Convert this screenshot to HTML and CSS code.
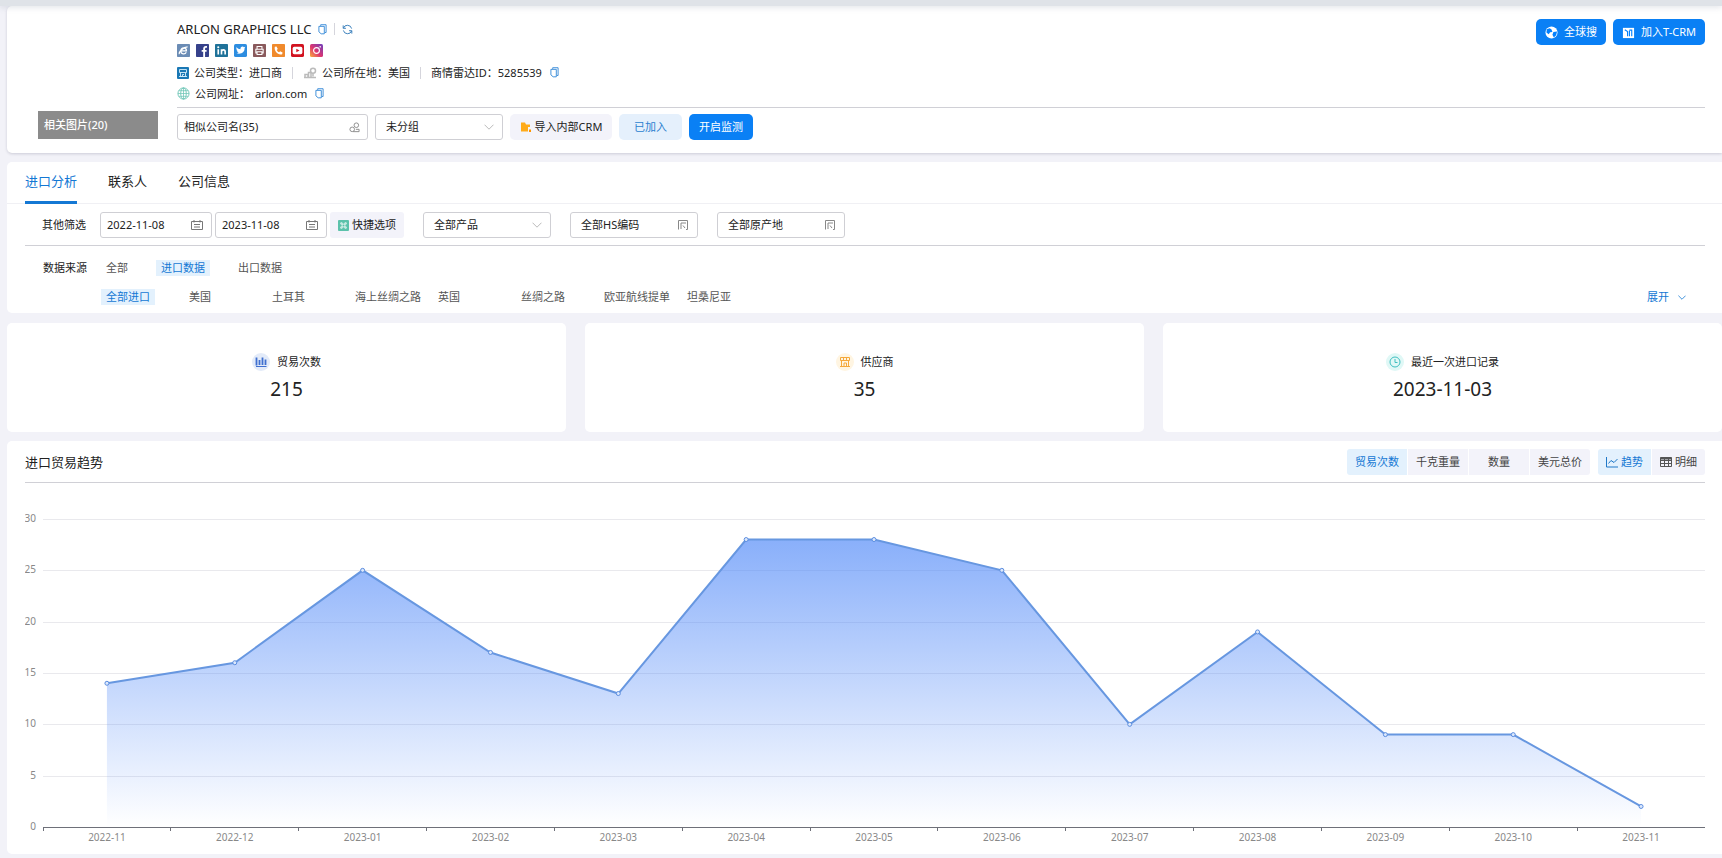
FILE: index.html
```html
<!DOCTYPE html>
<html lang="zh-CN">
<head>
    <meta charset="UTF-8">
    <meta name="viewport" content="width=device-width, initial-scale=1.0">
    <title>ARLON GRAPHICS LLC</title>
    <link rel="stylesheet" href="styles.css">
</head>
<body>
    <!-- shared icons -->
    <svg class="sprite" aria-hidden="true">
        <symbol id="copy" viewBox="0 0 10 12">
            <path d="M3 2V.7h6v8.6H7.6M1 2.5h6v8.3H3.5L1 8.6z" fill="none" stroke="#2f86d6"/>
        </symbol>
        <symbol id="chevron" viewBox="0 0 10 6">
            <path d="M.5.7 5 5.2 9.5.7" fill="none" stroke="currentColor"/>
        </symbol>
        <symbol id="calendar" viewBox="0 0 12 10">
            <path d="M.5 1.5h11v8H.5zM3 0v2.5M9 0v2.5M3 4.5h6M3 7h6" fill="none" stroke="#777"/>
        </symbol>
        <symbol id="popup" viewBox="0 0 10 10">
            <path d="M.5 9.5V.5h9v9H8M3 9V3h5M5 5.5 7 8" fill="none" stroke="#888"/>
        </symbol>
    </svg>

    <div class="topbar"></div>

    <header class="panel company">
        <div class="photo">相关图片(20)</div>
        <div class="company-main">
            <div class="company-top">
                <div class="details">
                    <div class="name-row">
                        <h1>ARLON GRAPHICS LLC</h1>
                        <button class="icon-btn" aria-label="复制名称"><svg class="icon-copy"><use href="#copy"/></svg></button>
                        <span class="sep"></span>
                        <button class="icon-btn" aria-label="刷新">
                            <svg class="icon-refresh" viewBox="0 0 12 12" fill="none" stroke="#2f78b8"><path d="M1.5 4.5A4.700 4.700 0 0 1 10.500 5M1.300 1.500v3.200h3M10.500 7.500A4.700 4.700 0 0 1 1.500 7M10.700 10.500V7.300h-3"/></svg>
                        </button>
                    </div>
                    <div class="social">
                        <a href="#" aria-label="网站"><svg viewBox="0 0 16 16"><rect width="16" height="16" rx="1" fill="#6b8cb5"/><path d="M4.500 8.500h7.200c0-5-6.700-5.200-7 0 0 4.300 5.300 4.600 6.700 1.700M3 12.500C1.500 10 8 3.500 13 3.500" fill="none" stroke="#fff" stroke-width="1.500"/></svg></a>
                        <a href="#" aria-label="Facebook"><svg viewBox="0 0 16 16"><rect width="16" height="16" rx="1" fill="#36418b"/><path d="M13.500 3.500h-1.300c-1.700 0-2.200.8-2.200 2.500v10M7 8.500h6" fill="none" stroke="#fff" stroke-width="2.300"/></svg></a>
                        <a href="#" aria-label="LinkedIn"><svg viewBox="0 0 16 16"><rect width="16" height="16" rx="1" fill="#1f7299"/><path d="M4 6.500V13M8 13V6.500M8 9.500c.2-3 4.500-3 4.500 0V13" fill="none" stroke="#fff" stroke-width="2"/><circle cx="4" cy="4" r="1.300" fill="#fff"/></svg></a>
                        <a href="#" aria-label="Twitter"><svg viewBox="0 0 16 16"><rect width="16" height="16" rx="2" fill="#2d8de0"/><path d="M3 4c1.500 1.700 3 2.300 5 2.400C7.500 3.300 11 2.300 12.300 4l1.700-.5-1 1.700c.2 4.500-3.500 8-10 6.300 1.300 0 2.400-.3 3-1-1.200-.2-2-.8-2.200-1.700h1C3.500 8.300 3 7.500 3 6.500l1 .2C2.800 5.800 2.500 5 3 4z" fill="#fff"/></svg></a>
                        <a href="#" aria-label="传真"><svg viewBox="0 0 16 16"><rect width="16" height="16" rx="1" fill="#8a5a5c"/><path d="M5 6V3h6v3M5 11H3.500V6.500h9V11H11M5 9.500h6V13H5z" fill="none" stroke="#fff" stroke-width="1.300"/></svg></a>
                        <a href="#" aria-label="电话"><svg viewBox="0 0 16 16"><rect width="16" height="16" rx="1" fill="#f08a2c"/><path d="M3.500 3.500 5.500 3l1.600 3-1.300 1.300c.8 1.500 1.600 2.300 3 3L10 9l3 1.500-.5 2C8 14.500 2 8.500 3.500 3.500z" fill="#fff"/></svg></a>
                        <a href="#" aria-label="YouTube"><svg viewBox="0 0 16 16"><rect width="16" height="16" rx="2" fill="#d2121f"/><rect x="2" y="3.500" width="12" height="9" rx="2" fill="#fff"/><path d="m6.500 5.700 4 2.300-4 2.300z" fill="#d2121f"/></svg></a>
                        <a href="#" aria-label="Instagram"><svg viewBox="0 0 16 16"><defs><linearGradient id="insta" x1="0" y1="1" x2="1" y2="0"><stop offset="0" stop-color="#fbb03b"/><stop offset=".45" stop-color="#dd3470"/><stop offset="1" stop-color="#6a3fc0"/></linearGradient></defs><rect width="16" height="16" rx="2" fill="url(#insta)"/><circle cx="8" cy="8" r="3.600" fill="none" stroke="#fff" stroke-width="1.400"/><circle cx="12.500" cy="3.500" r="1" fill="#fff"/></svg></a>
                    </div>
                    <div class="info-row">
                        <svg class="icon-type" viewBox="0 0 12 12"><rect width="12" height="12" rx="1" fill="#1a78b5"/><path d="M2.500 2.500h7v3h-7zM3.500 5.500v4h5v-4M2 9.500h8M5.500 9.500v-2h1.500" fill="none" stroke="#d5ecfa" stroke-width=".9"/></svg>
                        <span>公司类型：进口商</span>
                        <span class="sep"></span>
                        <svg class="icon-place" viewBox="0 0 14 12" fill="none" stroke="#bbb"><path d="M1 10.500h12M2 10V7.500h3V10M5.500 10V5.500H8V10" stroke-width="1.500"/><circle cx="10" cy="3.700" r="2.500" stroke-width="1.500"/><path d="M10 6.500v3" stroke-width="1.500"/></svg>
                        <span>公司所在地：美国</span>
                        <span class="sep"></span>
                        <span>商情雷达ID：5285539</span>
                        <button class="icon-btn" aria-label="复制ID"><svg class="icon-copy"><use href="#copy"/></svg></button>
                    </div>
                    <div class="info-row">
                        <svg class="icon-globe" viewBox="0 0 14 14" fill="none" stroke="#6cc5b5"><circle cx="7" cy="7" r="6"/><ellipse cx="7" cy="7" rx="3" ry="6"/><path d="M7 1v12M1 7h12M2 4h10M2 10h10" stroke-width=".8"/></svg>
                        <span>公司网址：</span>
                        <a href="#">arlon.com</a>
                        <button class="icon-btn" aria-label="复制网址"><svg class="icon-copy"><use href="#copy"/></svg></button>
                    </div>
                </div>
                <div class="actions">
                    <button class="btn btn-primary btn-top">
                        <svg class="icon-action" viewBox="0 0 14 14"><circle cx="7" cy="7" r="6.500" fill="#fff"/><path d="M2 3.500 5 2.300l2 1.500 1 2.700-2.500.3L4 9 1.500 7zM9 6.500l4-.5-1 4-2.500 2.500L8 9.500z" fill="#0080ff"/></svg>
                        全球搜
                    </button>
                    <button class="btn btn-primary btn-top">
                        <svg class="icon-action" viewBox="0 0 14 14"><path d="M1 2h12v11H1z" fill="#fff"/><path d="m3 4 3 2v5M8 5v6M10.500 4v7M8 4.500h3" fill="none" stroke="#0080ff" stroke-width="1.200"/></svg>
                        加入T-CRM
                    </button>
                </div>
            </div>
            <div class="controls">
                <div class="field field-similar">
                    <input type="text" value="相似公司名(35)" aria-label="相似公司名">
                    <svg class="icon-link" viewBox="0 0 12 12" fill="none" stroke="#888"><circle cx="3.500" cy="8" r="2.500"/><circle cx="8" cy="3.500" r="2.500"/><path d="M4.500 10.500h6.500V8H7.500"/></svg>
                </div>
                <div class="select">
                    <select aria-label="分组"><option>未分组</option></select>
                    <svg class="icon-chevron"><use href="#chevron"/></svg>
                </div>
                <button class="btn btn-light btn-import">
                    <svg class="icon-folder" viewBox="0 0 12 12"><path d="M1 1.500h4l1 2h4V6H8v4.500H1z" fill="#ffab1a"/><path d="M9 8.500h2V11H9z" fill="#ff9500"/></svg>
                    导入内部CRM
                </button>
                <button class="btn btn-joined">已加入</button>
                <button class="btn btn-primary btn-monitor">开启监测</button>
            </div>
        </div>
    </header>

    <section class="panel filters">
        <nav class="tabs">
            <a class="tab active" href="#">进口分析</a>
            <a class="tab" href="#">联系人</a>
            <a class="tab" href="#">公司信息</a>
        </nav>
        <div class="filter-row">
            <span class="filter-label">其他筛选</span>
            <div class="dates">
                <div class="field field-date">
                    <input type="text" value="2022-11-08" aria-label="开始日期">
                    <svg class="icon-calendar"><use href="#calendar"/></svg>
                </div>
                <div class="field field-date">
                    <input type="text" value="2023-11-08" aria-label="结束日期">
                    <svg class="icon-calendar"><use href="#calendar"/></svg>
                </div>
                <button class="btn btn-light btn-quick">
                    <svg class="icon-quick" viewBox="0 0 12 12"><rect width="12" height="12" rx="1" fill="#5cc2ab"/><path d="M4.500 4.500h3v3h-3zM4.500 4.500H3V3h1.500zM7.500 4.500H9V3H7.500zM4.500 7.500H3V9h1.500zM7.500 7.500H9V9H7.500z" fill="none" stroke="#fff" stroke-width=".8"/></svg>
                    快捷选项
                </button>
            </div>
            <div class="select">
                <select aria-label="产品"><option>全部产品</option></select>
                <svg class="icon-chevron"><use href="#chevron"/></svg>
            </div>
            <div class="field field-pick">
                <input type="text" value="全部HS编码" aria-label="HS编码">
                <svg class="icon-popup"><use href="#popup"/></svg>
            </div>
            <div class="field field-pick">
                <input type="text" value="全部原产地" aria-label="原产地">
                <svg class="icon-popup"><use href="#popup"/></svg>
            </div>
        </div>
        <div class="sources">
            <span>数据来源</span>
            <div class="source-types">
                <button class="chip">全部</button>
                <button class="chip active">进口数据</button>
                <button class="chip">出口数据</button>
            </div>
            <div class="countries">
                <div><button class="chip active">全部进口</button></div>
                <div><button class="chip">美国</button></div>
                <div><button class="chip">土耳其</button></div>
                <div><button class="chip">海上丝绸之路</button></div>
                <div><button class="chip">英国</button></div>
                <div><button class="chip">丝绸之路</button></div>
                <div><button class="chip">欧亚航线提单</button></div>
                <div><button class="chip">坦桑尼亚</button></div>
            </div>
            <button class="expand">展开 <svg class="icon-expand"><use href="#chevron"/></svg></button>
        </div>
    </section>

    <section class="stats">
        <div class="stat">
            <div class="stat-label">
                <svg viewBox="0 0 18 18"><circle cx="9" cy="9" r="9" fill="#e3ebf9"/><path d="M4.500 4.500v8M7.500 7v5M10.500 4.500V12M13.500 6.500V12" stroke="#3f6fd0" stroke-width="1.800"/><path d="M4 13.500h10.500" stroke="#3f6fd0"/></svg>
                贸易次数
            </div>
            <div class="stat-value">215</div>
        </div>
        <div class="stat">
            <div class="stat-label">
                <svg viewBox="0 0 18 18"><circle cx="9" cy="9" r="9" fill="#fff5e2"/><path d="M4.500 4.500h9v3h-9zM5.500 7.500V13M12.500 7.500V13M4 13.500h10M8 13v-3h2.500v3M7.500 4.500v3M10.500 4.500v3" fill="none" stroke="#f5a83a"/></svg>
                供应商
            </div>
            <div class="stat-value">35</div>
        </div>
        <div class="stat">
            <div class="stat-label">
                <svg viewBox="0 0 18 18"><circle cx="9" cy="9" r="9" fill="#e0f8f6"/><circle cx="9" cy="9" r="5" fill="none" stroke="#3fbfc0"/><path d="M9 6v3.500h2.500" fill="none" stroke="#3fbfc0"/></svg>
                最近一次进口记录
            </div>
            <div class="stat-value">2023-11-03</div>
        </div>
    </section>

    <section class="panel trend">
        <div class="trend-head">
            <h2>进口贸易趋势</h2>
            <div class="group">
                <button class="seg active">贸易次数</button>
                <button class="seg">千克重量</button>
                <button class="seg">数量</button>
                <button class="seg">美元总价</button>
            </div>
            <div class="group group-view">
                <button class="seg active">
                    <svg class="icon-seg" viewBox="0 0 12 12" fill="none" stroke="#1f78c8"><path d="M.5 1v10H12M2.500 7.500l2.500-3 3 2L11.500 3"/></svg>
                    趋势
                </button>
                <button class="seg">
                    <svg class="icon-seg" viewBox="0 0 12 12" fill="none" stroke="#555"><path d="M.5 1.500h11v9H.5zM.5 4.500h11M.5 7.500h11M4.500 2v8.500M8.500 2v8.500"/><path d="M.5 2.500h11" stroke-width="2"/></svg>
                    明细
                </button>
            </div>
        </div>
        <svg class="chart" id="chart"></svg>
    </section>
    <script src="chart.js"></script>
</body>
</html>
```
FILE: styles.css
```css
* {
    box-sizing: border-box;
}

body {
    margin: 0;
    padding: 0 0 4px 7px;
    background-color: #f2f2f8;
    color: #222;
    font-family: "Noto Sans", "Noto Sans CJK SC", sans-serif;
    font-size: 11px;
    line-height: 16px;
}

h1,
h2 {
    margin: 0;
    font-size: 13px;
    font-weight: 400;
    line-height: 20px;
}

button,
input,
select {
    margin: 0;
    padding: 0;
    border: 0;
    background: none;
    color: inherit;
    font: inherit;
}

button {
    cursor: pointer;
}

a {
    color: inherit;
    text-decoration: none;
}

svg {
    display: block;
    flex: none;
}

.sprite {
    display: none;
}

.topbar {
    height: 6px;
    margin-left: -7px;
    background-color: #dfe3e8;
    box-shadow: 0 1px 6px rgba(120, 130, 150, 0.25);
    position: relative;
}

.panel {
    background-color: #fff;
    border-radius: 5px 0 0 5px;
}

/* company header */
.company {
    display: flex;
    align-items: flex-end;
    gap: 19px;
    padding: 13px 17px 13px 31px;
    box-shadow: 0 1px 3px rgba(60, 60, 90, 0.2);
}

.photo {
    flex: none;
    width: 120px;
    height: 28px;
    margin-bottom: 1px;
    padding: 0 6px;
    background-color: #8b8b8b;
    color: #fff;
    font-weight: 500;
    line-height: 27px;
}

.company-main {
    flex: 1;
}

.company-top {
    display: flex;
    justify-content: space-between;
    align-items: flex-start;
    padding-bottom: 3px;
    border-bottom: 1px solid #d0d0d6;
}

.name-row,
.info-row,
.social,
.actions,
.controls {
    display: flex;
    align-items: center;
}

.name-row {
    gap: 7px;
}

.icon-btn {
    display: flex;
}

.icon-copy {
    width: 9px;
    height: 11px;
}

.icon-refresh {
    width: 11px;
    height: 11px;
}

.sep {
    width: 1px;
    height: 12px;
    background-color: #d5d5dc;
}

.social {
    gap: 6px;
    margin: 5px 0;
}

.social svg {
    width: 13px;
    height: 13px;
}

.info-row {
    height: 21px;
    gap: 5px;
}

.info-row .sep {
    margin: 0 5px;
}

.info-row .icon-btn {
    margin-left: 3px;
}

.icon-type {
    width: 12px;
    height: 12px;
}

.icon-place {
    width: 14px;
    height: 12px;
}

.icon-globe {
    width: 13px;
    height: 13px;
}

.actions {
    gap: 7px;
}

.controls {
    gap: 7px;
    padding-top: 6px;
}

.btn {
    display: flex;
    align-items: center;
    justify-content: center;
    height: 26px;
    border-radius: 5px;
    white-space: nowrap;
}

.btn-primary {
    background-color: #0a80f5;
    color: #fff;
}

.btn-light {
    background-color: #f3f3fa;
}

.btn-joined {
    width: 63px;
    background-color: #e5f0fc;
    color: #2a7fd0;
}

.btn-top {
    gap: 6px;
    padding: 0 9px;
}

.btn-import {
    gap: 3px;
    width: 102px;
}

.btn-monitor {
    width: 64px;
}

.icon-action {
    width: 13px;
    height: 13px;
}

.icon-folder {
    width: 12px;
    height: 12px;
}

.field,
.select {
    height: 26px;
    border: 1px solid #cfcfd4;
    border-radius: 3px;
    background-color: #fff;
}

.field {
    display: flex;
    align-items: center;
    padding: 0 7px 0 6px;
}

.field input {
    flex: 1;
    min-width: 0;
    outline: none;
}

.field-similar {
    width: 191px;
}

.field-date {
    width: 112px;
    padding-right: 8px;
}

.field-pick {
    width: 128px;
    padding: 0 9px 0 10px;
}

.icon-link {
    width: 11px;
    height: 11px;
}

.icon-calendar {
    width: 12px;
    height: 10px;
}

.icon-popup {
    width: 10px;
    height: 10px;
}

.select {
    display: grid;
    align-items: center;
    width: 128px;
}

.select select,
.select svg {
    grid-area: 1 / 1;
}

.select select {
    height: 24px;
    padding: 0 10px;
    appearance: none;
    outline: none;
}

.icon-chevron {
    justify-self: end;
    width: 10px;
    height: 6px;
    margin-right: 8px;
    color: #bbb;
    pointer-events: none;
}

/* tabs and filters */
.filters {
    margin-top: 9px;
}

.tabs {
    display: flex;
    gap: 31px;
    padding-left: 18px;
    border-bottom: 1px solid #f0f0f4;
}

.tab {
    height: 42px;
    margin-bottom: -1px;
    border-bottom: 3px solid transparent;
    font-size: 13px;
    line-height: 39px;
}

.tab.active {
    border-color: #1478d4;
    color: #1478d4;
}

.filter-row {
    display: flex;
    align-items: center;
    gap: 19px;
    margin: 0 17px 0 18px;
    padding: 8px 0 7px 17px;
    border-bottom: 1px solid #d0d0d6;
}

.filter-label {
    margin-right: -5px;
}

.dates {
    display: flex;
    gap: 3px;
}

.btn-quick {
    gap: 3px;
    width: 74px;
    border-radius: 3px;
}

.icon-quick {
    width: 11px;
    height: 11px;
}

.sources {
    display: grid;
    grid-template-columns: 58px 1fr auto;
    row-gap: 13px;
    padding: 14px 36px 8px;
}

.source-types {
    grid-column: 2 / 4;
    display: flex;
    gap: 23px;
}

.countries {
    grid-column: 2;
    display: grid;
    grid-template-columns: repeat(8, 83px);
}

.chip {
    display: block;
    height: 16px;
    padding: 0 5px;
    color: #555;
    line-height: 16px;
    white-space: nowrap;
}

.chip.active {
    background-color: #e3f1fd;
    color: #1478d4;
}

.expand {
    display: flex;
    align-items: center;
    gap: 9px;
    color: #1478d4;
}

.icon-expand {
    width: 8px;
    height: 5px;
}

/* summary cards */
.stats {
    display: grid;
    grid-template-columns: repeat(3, 1fr);
    gap: 19px;
    margin-top: 10px;
}

.stat {
    padding: 30px 0;
    border-radius: 5px;
    background-color: #fff;
    text-align: center;
}

.stat-label {
    display: flex;
    align-items: center;
    justify-content: center;
    gap: 7px;
    height: 18px;
}

.stat-label svg {
    width: 18px;
    height: 18px;
}

.stat-value {
    margin-top: 5px;
    font-size: 19px;
    line-height: 26px;
}

/* trend chart */
.trend {
    margin-top: 9px;
    padding: 0 17px 0 18px;
}

.trend-head {
    display: flex;
    align-items: center;
    height: 42px;
    border-bottom: 1px solid #d0d0d6;
}

.trend-head h2 {
    margin-right: auto;
}

.group {
    display: flex;
    gap: 1px;
    border-radius: 3px;
    overflow: hidden;
}

.group-view {
    margin-left: 8px;
}

.seg {
    display: flex;
    align-items: center;
    justify-content: center;
    gap: 3px;
    width: 60px;
    height: 26px;
    background-color: #f3f3fa;
    color: #444;
}

.group-view .seg {
    width: 53px;
}

.seg.active {
    background-color: #e3f1fd;
    color: #1478d4;
}

.icon-seg {
    width: 12px;
    height: 12px;
}

.chart {
    width: 100%;
    height: 371px;
}

.chart text {
    fill: #888;
    font-size: 10px;
}

.chart .grid {
    stroke: #e9e9ed;
}

.chart .axis {
    stroke: #6e7079;
}

.chart .line {
    fill: none;
    stroke: #6797e0;
    stroke-width: 2;
}

.chart .dot {
    fill: #dce8fb;
    stroke: #5b8de0;
}
```
FILE: chart.js
```javascript
const months = ['2022-11', '2022-12', '2023-01', '2023-02', '2023-03', '2023-04', '2023-05',
    '2023-06', '2023-07', '2023-08', '2023-09', '2023-10', '2023-11'];
const values = [14, 16, 25, 17, 13, 28, 28, 25, 10, 19, 9, 9, 2];

const chart = document.getElementById('chart');
const left = 18;
const top30 = 36;
const bottom = 344;

function drawChart() {
    const right = chart.clientWidth;
    const step = (right - left) / months.length;
    const yOf = value => bottom - value * (bottom - top30) / 30;
    const xOf = index => left + step * (index + 0.5);
    let html = '<defs><linearGradient id="fill" x1="0" y1="0" x2="0" y2="1">' +
        '<stop offset="0" stop-color="#4f88f8" stop-opacity="0.67"/>' +
        '<stop offset="1" stop-color="#4f88f8" stop-opacity="0"/></linearGradient></defs>';

    for (let value = 0; value <= 30; value += 5) {
        const y = Math.round(yOf(value)) + 0.5;
        if (value > 0) {
            html += `<line class="grid" x1="${left}" x2="${right}" y1="${y}" y2="${y}"/>`;
        }
        html += `<text x="11" y="${y + 2}" text-anchor="end">${value}</text>`;
    }

    const points = values.map((value, i) => `${xOf(i)},${yOf(value)}`).join(' ');
    html += `<polygon fill="url(#fill)" points="${xOf(0)},${bottom} ${points} ${xOf(12)},${bottom}"/>`;

    html += `<line class="axis" x1="${left}" x2="${right}" y1="${bottom + 0.5}" y2="${bottom + 0.5}"/>`;
    months.forEach((month, i) => {
        const tick = Math.floor(left + step * i) + 0.5;
        html += `<line class="axis" x1="${tick}" x2="${tick}" y1="${bottom}" y2="${bottom + 4}"/>`;
        html += `<text x="${xOf(i)}" y="${bottom + 14}" text-anchor="middle">${month}</text>`;
    });

    html += `<polyline class="line" points="${points}"/>`;
    values.forEach((value, i) => {
        html += `<circle class="dot" cx="${xOf(i)}" cy="${yOf(value)}" r="2"/>`;
    });
    chart.innerHTML = html;
}

drawChart();
window.addEventListener('resize', drawChart);
```
